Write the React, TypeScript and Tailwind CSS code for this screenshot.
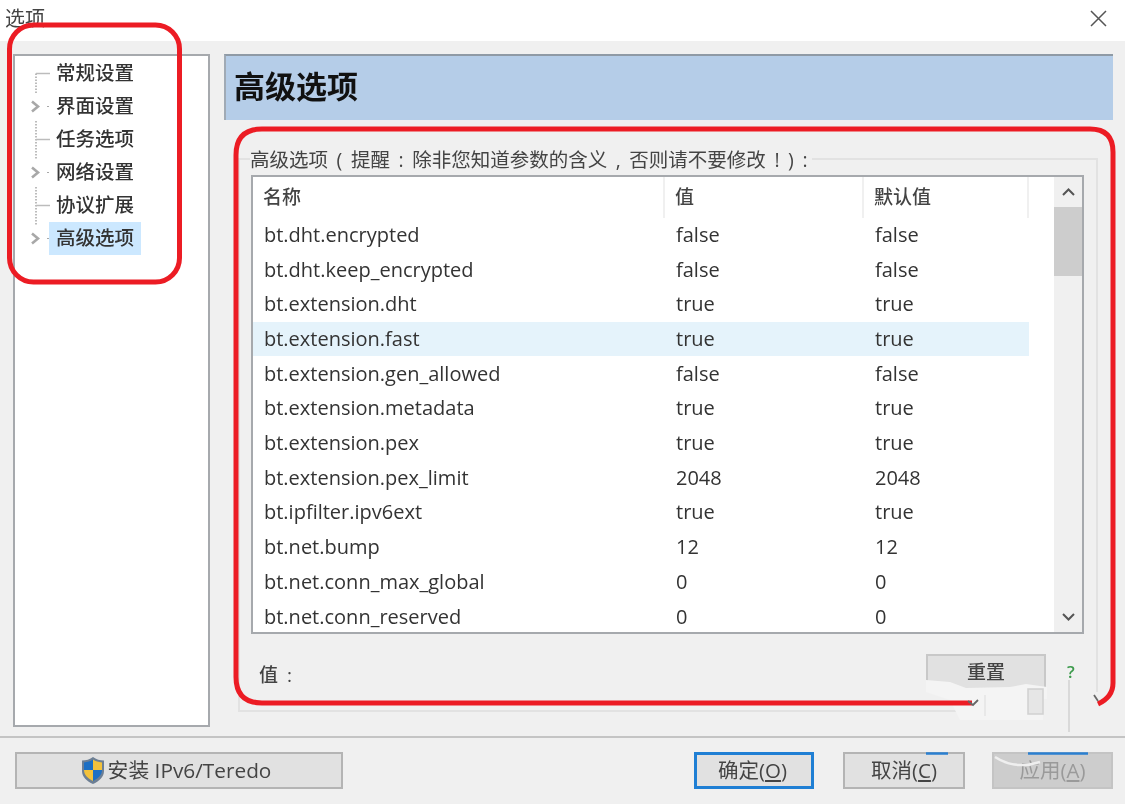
const rows = [
  ["bt.dht.encrypted", "false", "false"],
  ["bt.dht.keep_encrypted", "false", "false"],
  ["bt.extension.dht", "true", "true"],
  ["bt.extension.fast", "true", "true"],
  ["bt.extension.gen_allowed", "false", "false"],
  ["bt.extension.metadata", "true", "true"],
  ["bt.extension.pex", "true", "true"],
  ["bt.extension.pex_limit", "2048", "2048"],
  ["bt.ipfilter.ipv6ext", "true", "true"],
  ["bt.net.bump", "12", "12"],
  ["bt.net.conn_max_global", "0", "0"],
  ["bt.net.conn_reserved", "0", "0"],
]

const tree = [
  { label: "常规设置", kind: "first" },
  { label: "界面设置", kind: "group" },
  { label: "任务选项", kind: "leaf" },
  { label: "网络设置", kind: "group" },
  { label: "协议扩展", kind: "leaf" },
  { label: "高级选项", kind: "group", selected: true },
]

function TreeGlyph({ kind }: { kind: string }) {
  if (kind === "group") {
    return (
      <svg width="34" height="33" viewBox="0 0 34 33" className="shrink-0">
        <path d="M17 11.500l6 5-6 5" fill="none" stroke="#a8a8a8" strokeWidth="2.600" />
        <path d="M32 16.500h2" stroke="#a8a8a8" strokeWidth="1" />
      </svg>
    )
  }
  return (
    <svg width="34" height="33" viewBox="0 0 34 33" className="shrink-0 overflow-visible">
      <path d="M21 16.500h14" stroke="#bcbcbc" strokeWidth="1.500" />
      <path
        d={kind === "first" ? "M21 16.500v20" : "M21 -2v38"}
        stroke="#bcbcbc"
        strokeWidth="2"
        strokeDasharray="1.500 1.500"
      />
    </svg>
  )
}

function Shield() {
  return (
    <svg width="24" height="27" viewBox="0 0 24 27" className="shrink-0">
      <path d="M12 0C9 2.500 5 3.500 1 3.500V14c0 6 5 10.500 11 13 6-2.500 11-7 11-13V3.500C19 3.500 15 2.500 12 0z" fill="#6d7f94" />
      <path d="M12 2.500C9.500 4.300 6.500 5.200 3 5.400V13h9z" fill="#1d6fc4" />
      <path d="M12 2.500c2.500 1.800 5.500 2.700 9 2.900V13h-9z" fill="#f3c23c" />
      <path d="M3 13c0 5 4 8.500 9 11V13z" fill="#f3c23c" />
      <path d="M21 13c0 5-4 8.500-9 11V13z" fill="#1d6fc4" />
    </svg>
  )
}

function DlgButton({ children, className }: { children: React.ReactNode; className: string }) {
  return (
    <button className={`flex h-[37px] items-center justify-center border-2 text-[20.500px] ${className}`}>
      {children}
    </button>
  )
}

export default function App() {
  return (
    <div
      className="relative flex h-[804px] w-[1125px] flex-col overflow-hidden bg-[#f0f0f0] text-[#333] blur-[0.5px]"
      style={{ fontFamily: '"Open Sans", "Noto Sans CJK SC", sans-serif' }}
    >
      {/* title bar */}
      <div className="flex h-[41px] shrink-0 items-start justify-between bg-white pl-[5px] pr-[18px]">
        <span className="mt-[7px] text-[20px] leading-[24px] text-[#444]">选项</span>
        <svg width="17" height="17" viewBox="0 0 17 17" className="mt-[10px]">
          <path d="M1 1l15 15M16 1L1 16" stroke="#555" strokeWidth="1.500" />
        </svg>
      </div>

      {/* main */}
      <div className="flex h-[697px] shrink-0 gap-[14px] border-b-2 border-[#c4c4c4] pl-[13px] pt-[13px]">
        <div className="h-[673px] w-[197px] shrink-0 border-2 border-[#a6a9ad] bg-white pt-[1px]">
          {tree.map((t) => (
            <div key={t.label} className="flex h-[33px] items-center">
              <TreeGlyph kind={t.kind} />
              <span
                className={`flex h-[33px] w-[92px] items-center pl-[7px] text-[19.500px] font-medium whitespace-nowrap ${
                  t.selected ? "bg-[#cce8ff]" : ""
                }`}
              >
                <span className="-mt-[2px]">{t.label}</span>
              </span>
            </div>
          ))}
        </div>

        <div className="w-[889px] shrink-0">
          <div className="flex h-[66px] items-center border-t-2 border-l-2 border-t-[#8f9aa5] border-l-[#a0aab5] bg-[#b5cde8] pb-[4px] pl-[8px]">
            <h1 className="text-[31px] font-bold leading-none text-[#111]">高级选项</h1>
          </div>

          <div className="relative ml-[14px] mt-[38px] h-[554px] w-[860px] border-2 border-[#e2e2e2] pl-[11px] pt-[15px]">
            <span className="absolute left-[10px] top-[-10px] whitespace-nowrap bg-[#f0f0f0] pr-[4px] text-[19.500px] leading-[20px] text-[#444] [word-spacing:3.500px]">
              高级选项 ( 提醒 : 除非您知道参数的含义 , 否则请不要修改 ! ) :
            </span>

            <div className="flex h-[459px] w-[833px] overflow-hidden border-2 border-[#a6a9ad] bg-white">
              <div className="w-[776px] shrink-0">
                <div className="flex h-[40.600px] text-[19px] font-medium text-[#444]">
                  <div className="w-[412px] border-r-2 border-[#f0f0f0] pl-[10px] pt-[6px]">名称</div>
                  <div className="w-[199px] border-r-2 border-[#f0f0f0] pl-[10px] pt-[6px]">值</div>
                  <div className="w-[165px] border-r-2 border-[#f0f0f0] pl-[10px] pt-[6px]">默认值</div>
                </div>
                {rows.map((r, i) => (
                  <div
                    key={r[0]}
                    className={`grid h-[34.700px] grid-cols-[412px_199px_165px] items-center pl-[1px] text-[20px] ${
                      i === 3 ? "bg-[#e5f3fb]" : ""
                    }`}
                  >
                    <span className="pl-[10px]">{r[0]}</span>
                    <span className="pl-[10px]">{r[1]}</span>
                    <span className="pl-[10px]">{r[2]}</span>
                  </div>
                ))}
              </div>

              <div className="ml-[25px] flex w-[28px] shrink-0 flex-col bg-[#f0f0f0]">
                <div className="flex h-[30px] items-center justify-center">
                  <svg width="13" height="8" viewBox="0 0 13 8">
                    <path d="M1 7l5.500-5.500L12 7" fill="none" stroke="#555" strokeWidth="2" />
                  </svg>
                </div>
                <div className="h-[69px] bg-[#cdcdcd]" />
                <div className="flex-1" />
                <div className="flex h-[30px] items-center justify-center">
                  <svg width="13" height="8" viewBox="0 0 13 8">
                    <path d="M1 1l5.500 5.500L12 1" fill="none" stroke="#555" strokeWidth="2" />
                  </svg>
                </div>
              </div>
            </div>

            <div className="mt-[20px] flex items-start">
              <span className="ml-[8px] mt-[9px] w-[667px] text-[19px] font-medium leading-[24px] text-[#444] [word-spacing:4px]">值 :</span>
              <div className="flex h-[36px] w-[120px] items-center justify-center border-2 border-b-0 border-[#c8c8c8] bg-[#e1e1e1] pb-[2px] text-[19px] font-medium text-[#444]">
                重置
              </div>
              <span className="ml-[21px] mt-[6px] text-[17px] font-semibold leading-[24px] text-[#3c9a4c]">?</span>
            </div>
          </div>
        </div>
      </div>

      {/* footer */}
      <div className="flex h-[65px] items-start pl-[15px] pt-[14px]">
        <DlgButton className="w-[328px] gap-[3px] border-[#b4b4b4] bg-[#e1e1e1] pr-[6px] text-[#444]">
          <Shield />
          <span className="text-[20.800px]">安装 IPv6/Teredo</span>
        </DlgButton>
        <DlgButton className="ml-[351px] w-[120px] border-[3px] border-[#1f7fd4] bg-[#e1e1e1] pr-[3px] text-[#444]">
          确定(<span className="underline">O</span>)
        </DlgButton>
        <DlgButton className="ml-[29px] w-[122px] border-[#b4b4b4] bg-[#e1e1e1] text-[#444]">
          取消(<span className="underline">C</span>)
        </DlgButton>
        <DlgButton className="ml-[27px] w-[121px] border-[#c4c4c4] bg-[#cdcdcd] text-[#9a9a9a]">
          应用(<span className="underline">A</span>)
        </DlgButton>
      </div>

      {/* red marker annotations and retouch marks lying over the screenshot */}
      <svg width="1125" height="804" viewBox="0 0 1125 804" className="pointer-events-none absolute left-0 top-0">
        <path
          d="M926 680L950 682L966 688L1010 687L1026 684L1047 687V699H1043V720H960L950 700L926 692Z"
          fill="#f4f4f4"
        />
        <path d="M1043 700H1095V692H1101V718H1043Z" fill="#f0f0f0" />
        <rect x="1028" y="689" width="15" height="25" fill="#e6e6e6" stroke="#d0d0d0" strokeWidth="1.500" />
        <path d="M1069 680V732" stroke="#d2d2d2" strokeWidth="1.500" />
        <path d="M985 695V716" stroke="#e4e4e4" strokeWidth="1.500" />
        <path d="M926 753.500H948M1028 753.500H1088" stroke="#2a7fd0" strokeWidth="2.500" />
        <path d="M995 757Q1015 770 1040 762" fill="none" stroke="#efefef" strokeWidth="2.500" />
        <rect x="9.500" y="25" width="170" height="257" rx="24" fill="none" stroke="#ec1c24" strokeWidth="5" />
        <path
          d="M972 703H262Q236 703 236 677V155Q236 129 262 129H1090Q1113 129 1113 152V683Q1113 697 1098 704"
          fill="none"
          stroke="#ec1c24"
          strokeWidth="5"
        />
        <path d="M968 701l5 4 5-5M1094 695l4 6" fill="none" stroke="#666" strokeWidth="1.800" />
      </svg>
    </div>
  )
}
